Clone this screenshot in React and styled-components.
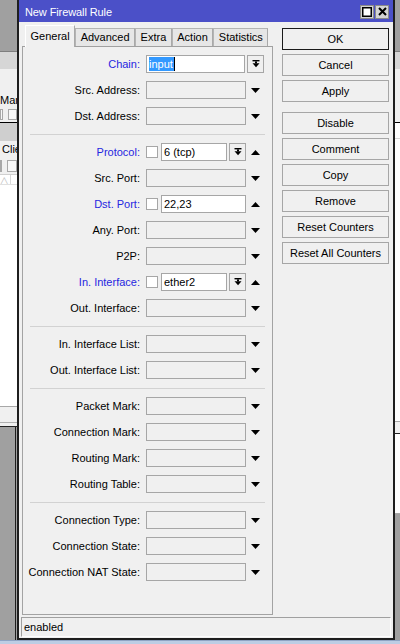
import React from "react";
import styled, { createGlobalStyle } from "styled-components";

const Global = createGlobalStyle`
  html, body { margin: 0; padding: 0; background: #a0a0a0; }
  body { font-family: "Liberation Sans", Arial, sans-serif; font-size: 11px; color: #000; }
  * { box-sizing: border-box; }
`;

const Screen = styled.div`
  width: 400px;
  height: 644px;
  overflow: hidden;
  display: flex;
  flex-direction: column;
  background: #a0a0a0;
`;

const Desk = styled.div`
  height: 640px;
  display: flex;
`;

const Taskbar = styled.div`
  height: 4px;
  background: #bccde4;
  border-top: 1px solid #8ea4c4;
`;

/* ---------- background application strips ---------- */
const Strip = styled.div`
  width: ${(p) => p.$w}px;
  flex: none;
  display: flex;
  flex-direction: column;
  overflow: hidden;
`;

const Band = styled.div`
  flex: ${(p) => (p.$fill ? "1" : "none")};
  height: ${(p) => (p.$fill ? "auto" : `${p.$h}px`)};
  background: ${(p) => p.$bg};
  border-bottom: ${(p) => (p.$line ? `1px solid ${p.$line}` : "none")};
  position: relative;
  overflow: hidden;
  white-space: nowrap;
  font-size: 11px;
  line-height: ${(p) => p.$h}px;
  color: ${(p) => p.$color || "#000"};
  padding-left: ${(p) => p.$pl || 0}px;
`;

const MiniBoxes = styled.div`
  display: flex;
  gap: 5px;
  height: 100%;
  padding: 2px 0;
`;

const MiniBox = styled.div`
  width: ${(p) => p.$w}px;
  height: 100%;
  border: 1px solid #a8a8a8;
  background: #f7f7f7;
`;

const VLine = styled.div`
  position: absolute;
  top: 0;
  bottom: 0;
  left: ${(p) => p.$x}px;
  width: 1px;
  background: ${(p) => p.$c};
`;

/* ---------- window ---------- */
const Window = styled.div`
  width: 378px;
  flex: none;
  display: flex;
  flex-direction: column;
  background: #f0f0f0;
  border-left: 2px solid #1e1e1e;
  border-right: 2px solid #1e1e1e;
  border-bottom: 2px solid #1e1e1e;
`;

const TitleBar = styled.div`
  height: 22px;
  flex: none;
  background: #4b50c8;
  display: flex;
  align-items: center;
  padding: 1px 4px 0 6px;
`;

const Title = styled.div`
  flex: 1;
  color: #fff;
  font-size: 11px;
  letter-spacing: -0.1px;
`;

const TitleButtons = styled.div`
  display: flex;
  gap: 1px;
`;

const TitleButton = styled.div`
  width: 14px;
  height: 14px;
  background: #d4d4d4;
  border: 1px solid #8a8a8a;
  display: flex;
  align-items: center;
  justify-content: center;
`;

const Main = styled.div`
  flex: none;
  height: 593px;
  display: flex;
  padding-left: 3px;
`;

const TabColumn = styled.div`
  width: 251px;
  display: flex;
  flex-direction: column;
  padding-top: 3px;
`;

const TabRow = styled.div`
  height: 21px;
  display: flex;
  align-items: flex-end;
  padding-left: 3px;
`;

const Tab = styled.div`
  position: relative;
  z-index: ${(p) => (p.$active ? 2 : 1)};
  height: ${(p) => (p.$active ? 22 : 18)}px;
  margin-bottom: ${(p) => (p.$active ? -1 : 0)}px;
  padding: ${(p) => (p.$active ? "2px 4.5px 0" : "0 4.5px")};
  background: ${(p) => (p.$active ? "#f0f0f0" : "#e6e6e6")};
  border: 1px solid #a9a9a9;
  border-top-color: ${(p) => (p.$active ? "#ffffff" : "#b4b4b4")};
  border-left-color: ${(p) => (p.$active ? "#ffffff" : "#b4b4b4")};
  border-bottom: none;
  font-size: 11px;
  line-height: 17px;
  white-space: nowrap;
`;

const Panel = styled.div`
  height: 569px;
  border: 1px solid #a3a3a3;
  border-top-color: #a0a0a0;
  padding-top: 8px;
  display: flex;
  flex-direction: column;
`;

const Section = styled.div`
  display: flex;
  flex-direction: column;
  gap: 8px;
`;

const Separator = styled.div`
  height: 1px;
  margin: 9px 7px 8px;
  background: #d2d2d2;
`;

const Row = styled.div`
  height: 18px;
  display: grid;
  grid-template-columns: 117px auto;
  column-gap: 6px;
  align-items: center;
`;

const Label = styled.div`
  text-align: right;
  white-space: nowrap;
  font-size: 11px;
  line-height: 18px;
  color: ${(p) => (p.$blue ? "#2626e0" : "#000")};
`;

const Controls = styled.div`
  display: flex;
  align-items: center;
  height: 18px;
`;

const EmptyBox = styled.div`
  width: 100px;
  height: 18px;
  border: 1px solid #a6a6a6;
  background: #f0f0f0;
`;

const CheckBox = styled.div`
  width: 12px;
  height: 12px;
  margin-right: 3px;
  border: 1px solid #a6a6a6;
  background: #fff;
`;

const TextField = styled.div`
  width: ${(p) => p.$w}px;
  height: 18px;
  border: 1px solid #a6a6a6;
  background: #fff;
  padding-left: 2px;
  font-size: 11px;
  line-height: 16px;
  white-space: nowrap;
  overflow: hidden;
  display: flex;
  align-items: center;
`;

const Selected = styled.span`
  background: #3399ff;
  color: #fff;
  line-height: 14px;
  padding-right: 1px;
`;

const Caret = styled.span`
  display: inline-block;
  width: 1px;
  height: 14px;
  background: #000;
`;

const ComboButton = styled.div`
  width: 17px;
  height: 18px;
  margin-left: 2px;
  border: 1px solid #a6a6a6;
  background: #f0f0f0;
  display: flex;
  align-items: center;
  justify-content: center;
`;

const ArrowSlot = styled.div`
  width: 9px;
  margin-left: 5px;
  display: flex;
  align-items: center;
`;

const ButtonCol = styled.div`
  width: 107px;
  margin-left: 9px;
  margin-top: 6px;
  display: flex;
  flex-direction: column;
  gap: 4px;
`;

const Button = styled.div`
  height: 22px;
  border: 1px solid ${(p) => (p.$primary ? "#1a1a1a" : "#a6a6a6")};
  background: #f0f0f0;
  margin-top: ${(p) => (p.$spaced ? 6 : 0)}px;
  display: flex;
  align-items: center;
  justify-content: center;
  font-size: 11px;
  white-space: nowrap;
`;

const StatusBar = styled.div`
  height: 20px;
  margin: 2px 2px 1px;
  border-top: 1px solid #a0a0a0;
  border-left: 1px solid #a0a0a0;
  border-right: 1px solid #fdfdfd;
  border-bottom: 1px solid #fdfdfd;
  padding-left: 2px;
  font-size: 11px;
  line-height: 18px;
`;

/* ---------- icons ---------- */
const DownTri = () => (
  <svg width="9" height="5" viewBox="0 0 9 5">
    <polygon points="0,0 9,0 4.5,5" fill="#000" />
  </svg>
);
const UpTri = () => (
  <svg width="9" height="5" viewBox="0 0 9 5">
    <polygon points="0,5 9,5 4.5,0" fill="#000" />
  </svg>
);
const ComboIcon = () => (
  <svg width="8" height="8" viewBox="0 0 8 8">
    <rect x="0.5" y="0" width="7" height="1.4" fill="#000" />
    <rect x="3" y="1.4" width="2" height="2" fill="#000" />
    <polygon points="0.5,3.2 7.5,3.2 4,7.2" fill="#000" />
  </svg>
);
const MaxIcon = () => (
  <svg width="10" height="10" viewBox="0 0 10 10">
    <rect x="0.75" y="0.75" width="8.5" height="8.5" fill="#fff" stroke="#000" strokeWidth="1.5" />
  </svg>
);
const CloseIcon = () => (
  <svg width="9" height="9" viewBox="0 0 9 9">
    <path d="M1 1 L8 8 M8 1 L1 8" stroke="#000" strokeWidth="2" />
  </svg>
);

/* ---------- data ---------- */
const sections = [
  [
    { label: "Chain", blue: true, kind: "chain", value: "input" },
    { label: "Src. Address" },
    { label: "Dst. Address" },
  ],
  [
    { label: "Protocol", blue: true, kind: "checkCombo", value: "6 (tcp)" },
    { label: "Src. Port" },
    { label: "Dst. Port", blue: true, kind: "checkText", value: "22,23" },
    { label: "Any. Port" },
    { label: "P2P" },
    { label: "In. Interface", blue: true, kind: "checkCombo", value: "ether2" },
    { label: "Out. Interface" },
  ],
  [{ label: "In. Interface List" }, { label: "Out. Interface List" }],
  [
    { label: "Packet Mark" },
    { label: "Connection Mark" },
    { label: "Routing Mark" },
    { label: "Routing Table" },
  ],
  [
    { label: "Connection Type" },
    { label: "Connection State" },
    { label: "Connection NAT State" },
  ],
];

const tabs = ["General", "Advanced", "Extra", "Action", "Statistics"];

const buttons = [
  { t: "OK", primary: true },
  { t: "Cancel" },
  { t: "Apply" },
  { t: "Disable", spaced: true },
  { t: "Comment" },
  { t: "Copy" },
  { t: "Remove" },
  { t: "Reset Counters" },
  { t: "Reset All Counters" },
];

function FieldControls({ f }) {
  if (f.kind === "chain") {
    return (
      <Controls>
        <TextField $w={99}>
          <Selected>{f.value}</Selected>
          <Caret />
        </TextField>
        <ComboButton>
          <ComboIcon />
        </ComboButton>
      </Controls>
    );
  }
  if (f.kind === "checkCombo") {
    return (
      <Controls>
        <CheckBox />
        <TextField $w={66}>{f.value}</TextField>
        <ComboButton>
          <ComboIcon />
        </ComboButton>
        <ArrowSlot>
          <UpTri />
        </ArrowSlot>
      </Controls>
    );
  }
  if (f.kind === "checkText") {
    return (
      <Controls>
        <CheckBox />
        <TextField $w={85}>{f.value}</TextField>
        <ArrowSlot>
          <UpTri />
        </ArrowSlot>
      </Controls>
    );
  }
  return (
    <Controls>
      <EmptyBox />
      <ArrowSlot>
        <DownTri />
      </ArrowSlot>
    </Controls>
  );
}

export default function App() {
  return (
    <Screen>
      <Global />
      <Desk>
        <Strip $w={17}>
          <Band $h={52} $bg="#a0a0a0" $line="#7e7e7e" />
          <Band $h={17} $bg="#d6d6d6" />
          <Band $h={24} $bg="#f0f0f0" />
          <Band $h={14} $bg="#f0f0f0">Mar</Band>
          <Band $h={16} $bg="#f0f0f0" $line="#000">
            <MiniBoxes>
              <MiniBox $w={3} />
              <MiniBox $w={12} />
            </MiniBoxes>
          </Band>
          <Band $h={18} $bg="#cfcfcf" />
          <Band $h={17} $bg="#f0f0f0" $pl={2}>Clie</Band>
          <Band $h={17} $bg="#f0f0f0" $line="#d0d0d0">
            <MiniBoxes>
              <MiniBox $w={2} />
              <MiniBox $w={12} />
            </MiniBoxes>
          </Band>
          <Band $h={10} $bg="#fff" $line="#e0e0e0" $color="#bbb">
            △<VLine $x={10} $c="#d8d8d8" />
          </Band>
          <Band $h={10} $bg="#fff" $color="#e00000" $pl={12} />
          <Band $fill $bg="#fff" $line="#a8a8a8" />
          <Band $h={16} $bg="#f0f0f0" $line="#b0b0b0" />
          <Band $h={4} $bg="#f0f0f0" $line="#222" />
          <Band $h={213} $bg="#a0a0a0">
            <VLine $x={15} $c="#1e1e1e" />
          </Band>
        </Strip>

        <Window>
          <TitleBar>
            <Title>New Firewall Rule</Title>
            <TitleButtons>
              <TitleButton>
                <MaxIcon />
              </TitleButton>
              <TitleButton>
                <CloseIcon />
              </TitleButton>
            </TitleButtons>
          </TitleBar>

          <Main>
            <TabColumn>
              <TabRow>
                {tabs.map((t, i) => (
                  <Tab key={t} $active={i === 0}>
                    {t}
                  </Tab>
                ))}
              </TabRow>
              <Panel>
                {sections.map((sec, si) => (
                  <React.Fragment key={si}>
                    {si > 0 && <Separator />}
                    <Section>
                      {sec.map((f) => (
                        <Row key={f.label}>
                          <Label $blue={f.blue}>{f.label}:</Label>
                          <FieldControls f={f} />
                        </Row>
                      ))}
                    </Section>
                  </React.Fragment>
                ))}
              </Panel>
            </TabColumn>

            <ButtonCol>
              {buttons.map((b) => (
                <Button key={b.t} $primary={b.primary} $spaced={b.spaced}>
                  {b.t}
                </Button>
              ))}
            </ButtonCol>
          </Main>

          <StatusBar>enabled</StatusBar>
        </Window>

        <Strip $w={5}>
          <Band $h={52} $bg="#a0a0a0" $line="#7e7e7e" />
          <Band $h={17} $bg="#d6d6d6" />
          <Band $h={54} $bg="#f0f0f0" $line="#000" />
          <Band $h={16} $bg="#fff" $line="#d8d8d8" />
          <Band $fill $bg="#fff" $line="#a8a8a8" />
          <Band $h={12} $bg="#f0f0f0" $line="#222" />
          <Band $h={80} $bg="#fff" $line="#a8a8a8" />
          <Band $h={126} $bg="#a0a0a0" />
        </Strip>
      </Desk>
      <Taskbar />
    </Screen>
  );
}
